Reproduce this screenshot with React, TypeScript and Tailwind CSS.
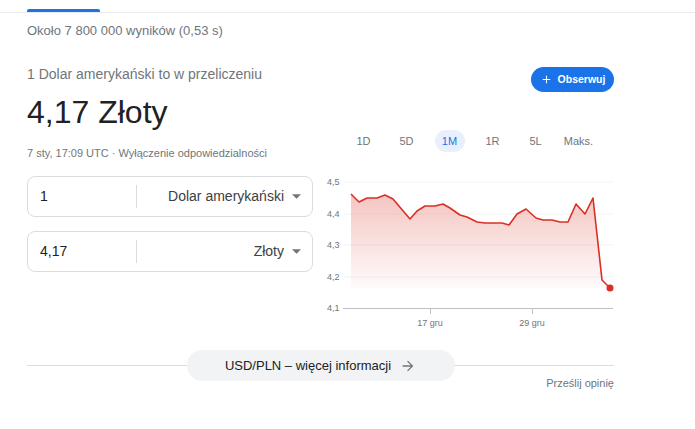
import React from 'react';

const points: [number, number][] = [
  [351, 194], [359, 202], [367, 198], [377, 198], [385, 195], [393, 199], [410, 219],
  [417, 211], [425, 206], [435, 206], [443, 204], [450, 208], [460, 215], [467, 217],
  [477, 222], [485, 223], [502, 223], [509, 225], [517, 214], [526, 209], [536, 218],
  [543, 220], [552, 220], [560, 222], [568, 222], [576, 204], [585, 214], [593, 198],
  [602, 280], [610, 288],
];

const tabs = ['1D', '5D', '1M', '1R', '5L', 'Maks.'];

const yLabels = [
  { label: '4,5', y: 182 },
  { label: '4,4', y: 214 },
  { label: '4,3', y: 245 },
  { label: '4,2', y: 277 },
];

const CurrencyBox = ({ value, unit }: { value: string; unit: string }) => (
  <div className="h-[41px] rounded-[8px] border border-[#dadce0] flex items-center">
    <div className="w-[108px] pl-[12px] text-[14px] text-[#202124]">{value}</div>
    <div className="w-px h-[23px] bg-[#dadce0]" />
    <div className="flex-1 flex items-center justify-end pr-[11px] text-[14px] text-[#3c4043]">
      <span>{unit}</span>
      <svg width="9" height="5" viewBox="0 0 10 5" className="ml-[8px]">
        <path d="M0 0l5 5 5-5z" fill="#70757a" />
      </svg>
    </div>
  </div>
);

const Chart = () => {
  const line = points.map(([x, y]) => `${x},${y}`).join(' ');
  const area = `M351,288 L${line.replace(/ /g, ' L')} L610,288 Z`;
  return (
    <svg width="295" height="165" viewBox="319 172 295 165">
      <defs>
        <linearGradient id="fill" x1="0" y1="0" x2="0" y2="1">
          <stop offset="0%" stopColor="#d93025" stopOpacity="0.28" />
          <stop offset="100%" stopColor="#d93025" stopOpacity="0.02" />
        </linearGradient>
      </defs>
      {yLabels.map((l) => (
        <g key={l.label}>
          <line x1="344" x2="614" y1={l.y} y2={l.y} stroke="#f1f3f4" strokeWidth="1" />
          <text x="327" y={l.y + 3} fontSize="9" fill="#70757a">{l.label}</text>
        </g>
      ))}
      <text x="327" y="311" fontSize="9" fill="#70757a">4,1</text>
      <line x1="343" x2="613" y1="308.5" y2="308.5" stroke="#bdc1c6" strokeWidth="1" />
      <line x1="430.5" x2="430.5" y1="308" y2="314" stroke="#bdc1c6" strokeWidth="1" />
      <line x1="532.5" x2="532.5" y1="308" y2="314" stroke="#bdc1c6" strokeWidth="1" />
      <text x="430" y="326" fontSize="9" fill="#70757a" textAnchor="middle">17 gru</text>
      <text x="532" y="326" fontSize="9" fill="#70757a" textAnchor="middle">29 gru</text>
      <path d={area} fill="url(#fill)" />
      <polyline points={line} fill="none" stroke="#d93025" strokeWidth="1.6" strokeLinejoin="round" />
      <circle cx="610" cy="288" r="3.5" fill="#d93025" />
    </svg>
  );
};

export default function App() {
  return (
    <div className="min-h-screen bg-white font-['Liberation_Sans',Arial,sans-serif]">
      <div className="h-[13px] border-b border-[#ebebeb] flex items-end pl-[27px]">
        <div className="w-[73px] h-[3px] bg-[#1a73e8] rounded-t-[2px]" />
      </div>

      <div className="ml-[27px] w-[587px]">
        <div className="mt-[8px] text-[13px] leading-[20px] text-[#70757a]">
          Około 7 800 000 wyników (0,53 s)
        </div>

        <div className="mt-[23px] flex justify-between items-start">
          <div className="text-[14px] leading-[20px] text-[#70757a]">
            1 Dolar amerykański to w przeliczeniu
          </div>
          <button className="mt-[3px] h-[25px] w-[83px] rounded-full bg-[#1a73e8] flex items-center justify-center gap-[5px] text-white text-[10.5px] font-bold">
            <svg width="13" height="13" viewBox="0 0 24 24">
              <path d="M19 13h-6v6h-2v-6H5v-2h6V5h2v6h6v2z" fill="white" />
            </svg>
            Obserwuj
          </button>
        </div>

        <div className="flex">
          <div className="w-[286px]">
            <div className="text-[32px] leading-[40px] text-[#202124]">4,17 Złoty</div>
            <div className="mt-[13px] text-[11px] leading-[16px] text-[#70757a]">
              7 sty, 17:09 UTC · Wyłączenie odpowiedzialności
            </div>
            <div className="mt-[15px] flex flex-col gap-[14px]">
              <CurrencyBox value="1" unit="Dolar amerykański" />
              <CurrencyBox value="4,17" unit="Złoty" />
            </div>
          </div>

          <div className="flex-1 pl-[6px]">
            <div className="mt-[38px] ml-[23px] flex h-[22px]">
              {tabs.map((t) => (
                <div key={t} className="w-[43px] flex items-center justify-center">
                  {t === '1M' ? (
                    <span className="h-[22px] w-[30px] rounded-full bg-[#e8f0fe] text-[#1a73e8] text-[11px] flex items-center justify-center">
                      {t}
                    </span>
                  ) : (
                    <span className="text-[11px] text-[#70757a]">{t}</span>
                  )}
                </div>
              ))}
            </div>
            <div className="mt-[20px]">
              <Chart />
            </div>
          </div>
        </div>

        <div className="mt-[13px] flex items-center">
          <div className="flex-1 h-px bg-[#dadce0]" />
          <div className="h-[31px] w-[268px] rounded-full bg-[#f1f3f4] flex items-center justify-center gap-[9px] text-[13px] text-[#202124]">
            <span>USD/PLN – więcej informacji</span>
            <svg width="16" height="16" viewBox="0 0 24 24">
              <path d="M12 4l-1.41 1.41L16.17 11H4v2h12.17l-5.58 5.59L12 20l8-8z" fill="#70757a" />
            </svg>
          </div>
          <div className="flex-1 h-px bg-[#dadce0]" />
        </div>
        <div className="mt-[-6px] text-right text-[11px] leading-[16px] text-[#70757a]">
          Prześlij opinię
        </div>
      </div>
    </div>
  );
}
